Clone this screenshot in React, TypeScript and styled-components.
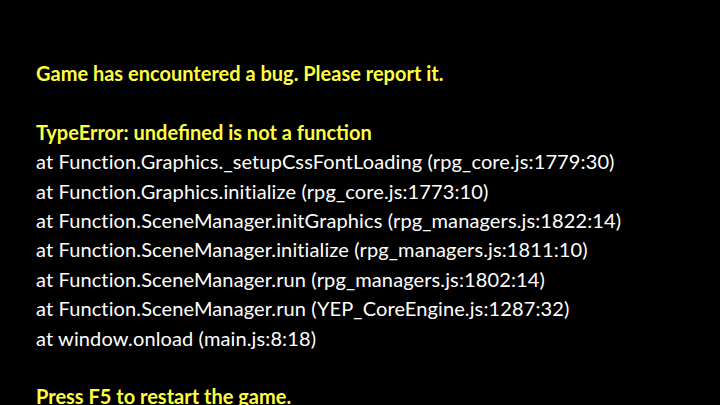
import React from "react";
import styled, { createGlobalStyle } from "styled-components";

const Global = createGlobalStyle`
  html, body { margin: 0; padding: 0; background: #000; }
  #root { width: 720px; height: 405px; overflow: hidden; }
`;

const Screen = styled.div`
  width: 720px;
  height: 405px;
  background: #000;
  box-sizing: border-box;
  padding: 59px 0 0 36px;
  font-family: "Lato", "DejaVu Sans", sans-serif;
  font-size: 20px;
  overflow: hidden;
`;

const Line = styled.div<{ $alert?: boolean }>`
  height: 29.4px;
  line-height: 29.4px;
  white-space: pre;
  color: ${(p) => (p.$alert ? "#ffff40" : "#ffffff")};
  font-weight: ${(p) => (p.$alert ? 700 : 400)};
  letter-spacing: ${(p) => (p.$alert ? "0" : "0.12px")};
`;

const stack = [
  "at Function.Graphics._setupCssFontLoading (rpg_core.js:1779:30)",
  "at Function.Graphics.initialize (rpg_core.js:1773:10)",
  "at Function.SceneManager.initGraphics (rpg_managers.js:1822:14)",
  "at Function.SceneManager.initialize (rpg_managers.js:1811:10)",
  "at Function.SceneManager.run (rpg_managers.js:1802:14)",
  "at Function.SceneManager.run (YEP_CoreEngine.js:1287:32)",
  "at window.onload (main.js:8:18)",
];

export default function App() {
  return (
    <>
      <Global />
      <Screen>
        <Line $alert>Game has encountered a bug. Please report it.</Line>
        <Line> </Line>
        <Line $alert>TypeError: undefined is not a function</Line>
        {stack.map((s) => (
          <Line key={s}>{s}</Line>
        ))}
        <Line> </Line>
        <Line $alert>Press F5 to restart the game.</Line>
      </Screen>
    </>
  );
}
